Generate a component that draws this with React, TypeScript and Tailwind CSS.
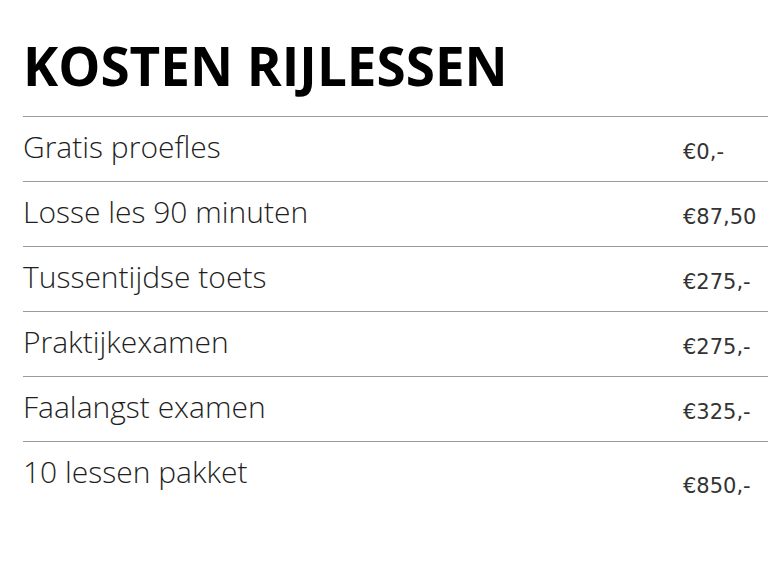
const rows = [
  { label: 'Gratis proefles', price: '€0,-' },
  { label: 'Losse les 90 minuten', price: '€87,50' },
  { label: 'Tussentijdse toets', price: '€275,-' },
  { label: 'Praktijkexamen', price: '€275,-' },
  { label: 'Faalangst examen', price: '€325,-' },
  { label: '10 lessen pakket', price: '€850,-' },
];

export default function App() {
  return (
    <div className="min-h-screen bg-white pl-[23px] overflow-hidden">
      <h1 className="pt-[30px] pb-[14px] text-[53px] leading-[72px] font-bold text-black font-['Open_Sans',sans-serif]">
        KOSTEN RIJLESSEN
      </h1>
      <div className="flex flex-col">
        {rows.map((row, i) => (
          <div key={row.label} className="flex items-center h-[65px] border-t border-[#9a9a9a]">
            <span className="w-[660px] mb-[6px] text-[30px] font-light text-[#1f1f1f] font-['Open_Sans',sans-serif]">
              {row.label}
            </span>
            <span
              className={
                (i === rows.length - 1 ? 'mt-[26px] ' : 'mt-[8px] ') +
                "text-[21px] font-normal text-[#333] font-['Verdana','DejaVu_Sans',sans-serif]"
              }
            >
              {row.price}
            </span>
          </div>
        ))}
      </div>
    </div>
  );
}
